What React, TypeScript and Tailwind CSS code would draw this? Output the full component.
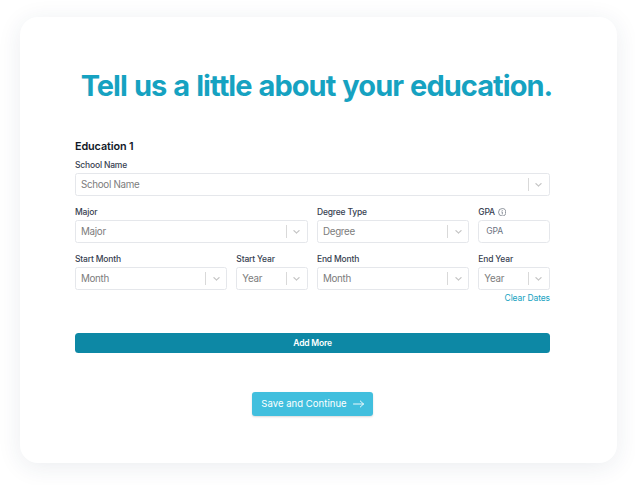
import React from "react";

function Chevron() {
  return (
    <svg viewBox="0 0 20 20" className="h-[11px] w-[11px] fill-[#c4c4c4]">
      <path d="M4.516 7.548c0.436-0.446 1.043-0.481 1.576 0l3.908 3.747 3.908-3.747c0.533-0.481 1.141-0.446 1.574 0 0.436 0.445 0.408 1.197 0 1.615-0.406 0.418-4.695 4.502-4.695 4.502-0.217 0.223-0.502 0.335-0.787 0.335s-0.57-0.112-0.789-0.335c0 0-4.287-4.084-4.695-4.502s-0.436-1.17 0-1.615z" />
    </svg>
  );
}

function InfoIcon() {
  return (
    <svg viewBox="0 0 24 24" fill="none" stroke="#4b5563" strokeWidth="1.7" strokeLinecap="round" className="h-[8.5px] w-[8.5px]">
      <circle cx="12" cy="12" r="10.5" />
      <path d="M10.8 11h1.4v6M12 7v.3" />
    </svg>
  );
}

function Label({ children }: { children: React.ReactNode }) {
  return (
    <div className="flex h-[14px] items-center gap-[3px] whitespace-nowrap text-[8.5px] font-medium leading-[14px] tracking-[-0.18px] text-[#374151]">
      {children}
    </div>
  );
}

function SelectField({ label, placeholder, className }: { label: string; placeholder: string; className: string }) {
  return (
    <div className={className}>
      <Label>{label}</Label>
      <div className="mt-[0.7px] flex h-[23.5px] items-center rounded-[2.5px] border border-[#e5e7eb] pl-[5px]">
        <span className="flex-1 pt-[1.4px] text-[9.8px] leading-[14px] tracking-[-0.3px] text-[#7c7c7c]">{placeholder}</span>
        <span className="h-[13px] w-px bg-[#d9d9d9]" />
        <span className="flex w-[20px] justify-center pt-px">
          <Chevron />
        </span>
      </div>
    </div>
  );
}

export default function App() {
  return (
    <div className="h-[485px] w-[635px] overflow-hidden bg-white pl-5 pt-[17px] font-['Inter',sans-serif]">
      <main className="h-[446px] w-[597px] rounded-[18px] bg-white px-[55px] pt-[50px] shadow-[0_4px_24px_rgba(30,60,90,0.09)]">
        <h1 className="-ml-6 -mr-5 h-[38px] whitespace-nowrap text-center text-[29px] font-bold leading-[38px] tracking-[-0.96px] text-[#16a2c1] [font-feature-settings:'calt'_0,'liga'_0] [word-spacing:1.1px]">
          Tell us a little about your education.
        </h1>
        <section className="w-[475px] pt-[35px]">
          <h2 className="h-[14px] text-[10.8px] font-semibold leading-[14px] tracking-[-0.1px] text-[#111827]">Education 1</h2>
          <div className="mt-[4px] grid grid-cols-6 gap-x-[9px] gap-y-[8.8px]">
            <SelectField className="col-span-6" label="School Name" placeholder="School Name" />
            <SelectField className="col-span-3" label="Major" placeholder="Major" />
            <SelectField className="col-span-2" label="Degree Type" placeholder="Degree" />
            <div>
              <Label>
                GPA <InfoIcon />
              </Label>
              <div className="mt-[0.7px] flex h-[23.5px] items-center rounded-[3.5px] border border-[#e5e7eb] pl-[7px] text-[8.6px] tracking-[-0.15px] text-[#6b7280]">
                GPA
              </div>
            </div>
            <SelectField className="col-span-2" label="Start Month" placeholder="Month" />
            <SelectField className="col-span-1" label="Start Year" placeholder="Year" />
            <SelectField className="col-span-2" label="End Month" placeholder="Month" />
            <SelectField className="col-span-1" label="End Year" placeholder="Year" />
          </div>
          <div className="mt-[2px] h-[12px] text-right text-[8.5px] leading-[12px] tracking-[-0.12px] text-[#16a2c1]">Clear Dates</div>
          <button className="mt-[29px] flex h-5 w-full items-center justify-center rounded-[3.5px] bg-[#0d88a5] text-[8.5px] font-semibold tracking-[-0.2px] text-white">
            Add More
          </button>
          <button className="mx-auto mt-[39px] flex h-[23.5px] w-[121px] items-center justify-center gap-[6px] whitespace-nowrap rounded-[3px] bg-[#41bfde] text-[9.5px] tracking-[0.05px] text-white shadow-[0_1px_2px_rgba(0,0,0,0.15)]">
            Save and Continue
            <svg viewBox="0 0 11 8" fill="none" stroke="white" strokeWidth="0.9" strokeLinecap="round" strokeLinejoin="round" className="h-2 w-[11px]">
              <path d="M.5 4h10M7.3 1l3.2 3-3.2 3" />
            </svg>
          </button>
        </section>
      </main>
    </div>
  );
}
